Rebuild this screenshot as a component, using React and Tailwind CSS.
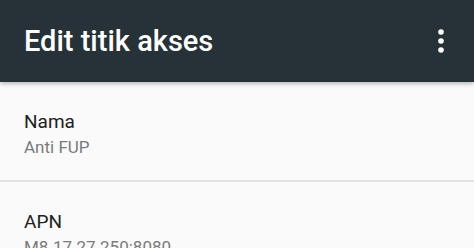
import React from "react";

const items = [
  { label: "Nama", value: "Anti FUP" },
  { label: "APN", value: "M8.17.27.250:8080" },
];

const MoreIcon = () => (
  <svg width="12" height="26" viewBox="0 0 12 26" fill="#ffffff">
    <circle cx="6" cy="4" r="2.8" />
    <circle cx="6" cy="13" r="2.8" />
    <circle cx="6" cy="22" r="2.8" />
  </svg>
);

const App = () => {
  return (
    <div
      className="w-[474px] h-[248px] overflow-hidden bg-[#fafafa]"
      style={{ fontFamily: "Roboto, 'Noto Sans', sans-serif" }}
    >
      {/* Toolbar */}
      <div className="relative z-10 h-[82px] bg-[#263238] flex items-center justify-between pl-6 pr-[27px] shadow-[0_2px_4px_rgba(0,0,0,0.25)]">
        <h1 className="text-[29px] font-medium text-white leading-none">
          Edit titik akses
        </h1>
        <MoreIcon />
      </div>

      {/* Preferences */}
      <div className="flex flex-col">
        {items.map((item, i) => (
          <div key={item.label} className="flex flex-col">
            <div className="pl-6 pt-[28px] pb-[22px]">
              <div className="text-[19px] leading-[24px] text-[#212121]">{item.label}</div>
              <div className="mt-[2px] text-[17px] leading-[22px] text-[#7a7a7a]">{item.value}</div>
            </div>
            {i === 0 && <div className="h-[2px] bg-[#e2e2e2]" />}
          </div>
        ))}
      </div>
    </div>
  );
};

export default App;
